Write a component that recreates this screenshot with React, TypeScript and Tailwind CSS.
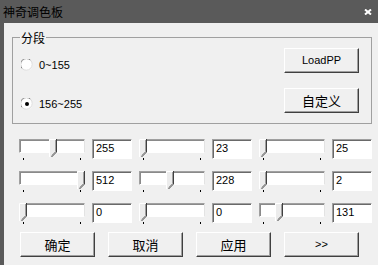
import React from 'react';

const ui = '"Liberation Sans", "Noto Sans CJK SC", sans-serif';
const cjk = '"Noto Sans CJK SC", "Liberation Sans", sans-serif';

interface SliderProps {
  pos: number; // thumb offset in px from the left of the track
}

const Thumb: React.FC = () => (
  <svg width="8" height="19" viewBox="0 0 8 19">
    <polygon points="0,0 8,0 8,13 3,18 0,18" fill="#ececec" />
    <polyline points="0.5,18 0.5,0.5 7,0.5" fill="none" stroke="#ffffff" />
    <polyline points="6.5,1 6.5,12.5 2.5,16.5" fill="none" stroke="#a0a0a0" />
    <polyline points="7.5,0 7.5,13 2.5,18" fill="none" stroke="#404040" />
  </svg>
);

const Slider: React.FC<SliderProps> = ({ pos }) => (
  <div className="relative w-[66px] h-[21px] shrink-0">
    <div className="h-[14px] w-full bg-white border border-[#a0a0a0] border-b-white border-r-[#e3e3e3] shadow-[inset_1px_1px_0_#8a8a8a]" />
    <div className="flex justify-between px-[4px] mt-[5px]">
      <span className="w-[1px] h-[2px] bg-black" />
      <span className="w-[1px] h-[2px] bg-black" />
    </div>
    <div className="absolute top-0" style={{ left: pos }}>
      <Thumb />
    </div>
  </div>
);

const Edit: React.FC<{ value: string }> = ({ value }) => (
  <div
    className="w-[40px] h-[20px] shrink-0 bg-white border border-[#a0a0a0] border-b-white border-r-white shadow-[inset_1px_1px_0_#696969] pl-[3px] text-[11px] leading-[17px] text-black"
    style={{ fontFamily: ui }}
  >
    {value}
  </div>
);

const Button: React.FC<{ label: string; font?: string; size?: string }> = ({ label, font = cjk, size = 'text-[13px]' }) => (
  <button
    className={`w-[75px] h-[25px] shrink-0 bg-[#f0f0f0] border border-white border-b-[#404040] border-r-[#404040] shadow-[inset_-1px_-1px_0_#a0a0a0] text-black flex items-center justify-center ${size}`}
    style={{ fontFamily: font }}
  >
    {label}
  </button>
);

const Radio: React.FC<{ checked?: boolean; label: string }> = ({ checked, label }) => (
  <div className="flex items-center gap-[6px] h-[14px]">
    <svg width="12" height="12" viewBox="0 0 12 12">
      <circle cx="6" cy="6" r="5.5" fill="#ffffff" />
      <path d="M1.2 9.5 A5.5 5.5 0 0 1 9.5 1.2" fill="none" stroke="#8a8a8a" />
      <path d="M9.5 1.2 A5.5 5.5 0 0 1 1.2 9.5" fill="none" stroke="#dcdcdc" />
      {checked && <circle cx="6" cy="6" r="2" fill="#000000" />}
    </svg>
    <span className="text-[11px] text-black" style={{ fontFamily: ui }}>
      {label}
    </span>
  </div>
);

const rows: { pos: number; value: string }[][] = [
  [
    { pos: 30, value: '255' },
    { pos: 0, value: '23' },
    { pos: 0, value: '25' },
  ],
  [
    { pos: 58, value: '512' },
    { pos: 27, value: '228' },
    { pos: 0, value: '2' },
  ],
  [
    { pos: 0, value: '0' },
    { pos: 0, value: '0' },
    { pos: 16, value: '131' },
  ],
];

export default function App() {
  return (
    <div className="w-[378px] h-[265px] bg-[#5a5a5a] flex flex-col overflow-hidden">
      {/* title bar */}
      <div className="h-[23px] shrink-0 flex items-center justify-between pl-[3px] pr-[6px]">
        <span className="text-[12px] text-black leading-none" style={{ fontFamily: cjk }}>
          神奇调色板
        </span>
        <svg width="8" height="6" viewBox="0 0 8 6">
          <path d="M1 0.5 L7 5.5 M7 0.5 L1 5.5" stroke="#ffffff" strokeWidth="2" />
        </svg>
      </div>

      {/* client area */}
      <div className="flex-1 ml-[4px] bg-[#f0f0f0] flex flex-col">
        {/* group box */}
        <div className="mt-[14px] ml-[8px] w-[360px] h-[87px] border border-[#a0a0a0] flex flex-col">
          <span
            className="-mt-[7px] ml-[7px] px-[1px] h-[14px] leading-[14px] w-fit bg-[#f0f0f0] text-[12px] text-black"
            style={{ fontFamily: cjk }}
          >
            分段
          </span>
          <div className="flex justify-between">
            <div className="flex flex-col pl-[8px]">
              <div className="mt-[13px]">
                <Radio label="0~155" />
              </div>
              <div className="mt-[25px]">
                <Radio checked label="156~255" />
              </div>
            </div>
            <div className="flex flex-col mr-[12px]">
              <div className="mt-[3px]">
                <Button label="LoadPP" font={ui} size="text-[11px]" />
              </div>
              <div className="mt-[15px]">
                <Button label="自定义" />
              </div>
            </div>
          </div>
        </div>

        {/* slider rows */}
        <div className="mt-[15px] ml-[15px] flex flex-col gap-[11px]">
          {rows.map((row, i) => (
            <div key={i} className="flex items-start gap-[7px] h-[21px]">
              {row.map((cell, j) => (
                <React.Fragment key={j}>
                  <Slider pos={cell.pos} />
                  <Edit value={cell.value} />
                </React.Fragment>
              ))}
            </div>
          ))}
        </div>

        {/* bottom buttons */}
        <div className="mt-[8px] ml-[16px] flex gap-[13px]">
          <Button label="确定" />
          <Button label="取消" />
          <Button label="应用" />
          <Button label=">>" font={ui} size="text-[11px]" />
        </div>
      </div>
    </div>
  );
}
